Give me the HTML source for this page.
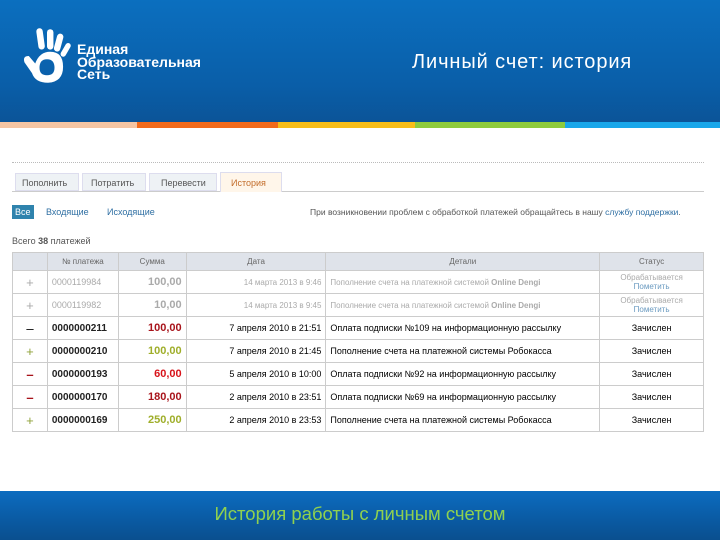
<!DOCTYPE html>
<html><head><meta charset="utf-8"><style>
*{margin:0;padding:0;box-sizing:border-box}
body{width:720px;height:540px;position:relative;background:#fff;font-family:"Liberation Sans",sans-serif;overflow:hidden}
.hdr{position:absolute;left:0;top:0;width:720px;height:122px;background:linear-gradient(#0b6fbf,#0a5ea8 70%,#0b5498)}
.str{position:absolute;top:122px;height:6px}
.ft{position:absolute;left:0;top:491px;width:720px;height:49px;background:linear-gradient(#0c6cc0,#0a5aa2 60%,#0a4f8f);text-align:center;color:#8fd14f;font-size:18.5px;line-height:46px}
.a{position:absolute;font-size:9px;color:#555;white-space:nowrap}
table{position:absolute;left:12px;top:252px;width:692px;border-collapse:collapse;font-size:9px}
td{border:1px solid #ccc;height:23px;white-space:nowrap;padding:0 4px}
tr.h td{background:#dfe3ea;height:18px;text-align:center;color:#666;font-size:8px}
.g{color:#aaa}.b{font-weight:bold;color:#222;font-size:10px}
.r{text-align:right;font-weight:bold;font-size:11px}
</style></head><body>
<div class="hdr">
<svg style="position:absolute;left:22px;top:26px" width="50" height="60" viewBox="0 0 46 56"><g fill="#fff"><rect x="14" y="2" width="6" height="20" rx="3" transform="rotate(-8 17 12)"/><rect x="23" y="3" width="6" height="19" rx="3"/><rect x="31" y="7" width="6" height="17" rx="3" transform="rotate(15 34 15)"/><rect x="38" y="15" width="5" height="14" rx="2.5" transform="rotate(30 40 22)"/><path d="M2 34 Q0 28 6 28 L12 35 Q16 24 26 24 Q38 24 38 38 Q38 52 24 53 Q12 53 9 44 Z M23 31 Q16 31 16 39 Q16 46 23 46 Q30 46 30 39 Q30 31 23 31Z" fill-rule="evenodd"/></g></svg>
<div style="position:absolute;left:77px;top:43px;color:#fff;font-weight:bold;font-size:14px;line-height:12.5px">Единая<br>Образовательная<br>Сеть</div>
<div style="position:absolute;left:412px;top:51px;color:#fff;font-size:20px;letter-spacing:0.9px">Личный счет: история</div>
</div>
<div class="str" style="left:0;width:137px;background:#f5c5a3"></div>
<div class="str" style="left:137px;width:141px;background:#f26a1b"></div>
<div class="str" style="left:278px;width:137px;background:#f7bd19"></div>
<div class="str" style="left:415px;width:150px;background:#8ecb3d"></div>
<div class="str" style="left:565px;width:155px;background:#19a7ea"></div>
<div style="position:absolute;left:12px;top:162px;width:692px;border-top:1px dotted #bbb"></div>
<div style="position:absolute;left:12px;top:191px;width:692px;border-top:1px solid #ccc"></div>
<div class="a" style="left:15px;top:173px;width:64px;height:18px;background:#eef2f5;border:1px solid #dde;padding:4px 6px">Пополнить</div>
<div class="a" style="left:82px;top:173px;width:64px;height:18px;background:#eef2f5;border:1px solid #dde;padding:4px 8px">Потратить</div>
<div class="a" style="left:149px;top:173px;width:68px;height:18px;background:#eef2f5;border:1px solid #dde;padding:4px 11px">Перевести</div>
<div class="a" style="left:220px;top:172px;width:62px;height:20px;background:#fff6ea;border:1px solid #dde;border-bottom:none;padding:5px 10px;color:#c36d2b">История</div>
<div class="a" style="left:12px;top:205px;background:#2f83ad;color:#fff;padding:2px 3px">Все</div>
<div class="a" style="left:46px;top:207px;color:#2f6fa3">Входящие</div>
<div class="a" style="left:107px;top:207px;color:#2f6fa3">Исходящие</div>
<div class="a" style="left:310px;top:207px;font-size:8.5px">При возникновении проблем с обработкой платежей обращайтесь в нашу <span style="color:#2f6fa3">службу поддержки</span>.</div>
<div class="a" style="left:12px;top:236px">Всего <b>38</b> платежей</div>
<table>
<col style="width:35px"><col style="width:71px"><col style="width:68px"><col style="width:140px"><col style="width:274px"><col style="width:104px">
<tr class="h"><td></td><td>№ платежа</td><td>Сумма</td><td>Дата</td><td>Детали</td><td>Статус</td></tr>
<tr class="g"><td style="text-align:center;font-size:13px">+</td><td>0000119984</td><td class="r" style="color:#aaa">100,00</td><td style="text-align:right;font-size:8px">14 марта 2013 в 9:46</td><td style="font-size:8px">Пополнение счета на платежной системой <b>Online Dengi</b></td><td style="text-align:center;font-size:8px;line-height:9px">Обрабатывается<br><span style="color:#6a9ac0">Пометить</span></td></tr>
<tr class="g"><td style="text-align:center;font-size:13px">+</td><td>0000119982</td><td class="r" style="color:#aaa">10,00</td><td style="text-align:right;font-size:8px">14 марта 2013 в 9:45</td><td style="font-size:8px">Пополнение счета на платежной системой <b>Online Dengi</b></td><td style="text-align:center;font-size:8px;line-height:9px">Обрабатывается<br><span style="color:#6a9ac0">Пометить</span></td></tr>
<tr><td style="text-align:center;font-size:13px">–</td><td class="b">0000000211</td><td class="r" style="color:#a8141b">100,00</td><td style="text-align:right">7 апреля 2010 в 21:51</td><td>Оплата подписки №109 на информационную рассылку</td><td style="text-align:center">Зачислен</td></tr>
<tr><td style="text-align:center;font-size:13px;color:#8fa23a">+</td><td class="b">0000000210</td><td class="r" style="color:#9fae2a">100,00</td><td style="text-align:right">7 апреля 2010 в 21:45</td><td>Пополнение счета на платежной системы Робокасса</td><td style="text-align:center">Зачислен</td></tr>
<tr><td style="text-align:center;font-size:13px;color:#a8141b;font-weight:bold">–</td><td class="b">0000000193</td><td class="r" style="color:#d8141b">60,00</td><td style="text-align:right">5 апреля 2010 в 10:00</td><td>Оплата подписки №92 на информационную рассылку</td><td style="text-align:center">Зачислен</td></tr>
<tr><td style="text-align:center;font-size:13px;color:#a8141b;font-weight:bold">–</td><td class="b">0000000170</td><td class="r" style="color:#a8141b">180,00</td><td style="text-align:right">2 апреля 2010 в 23:51</td><td>Оплата подписки №69 на информационную рассылку</td><td style="text-align:center">Зачислен</td></tr>
<tr><td style="text-align:center;font-size:13px;color:#8fa23a">+</td><td class="b">0000000169</td><td class="r" style="color:#9fae2a">250,00</td><td style="text-align:right">2 апреля 2010 в 23:53</td><td>Пополнение счета на платежной системы Робокасса</td><td style="text-align:center">Зачислен</td></tr>
</table>
<div class="ft">История работы с личным счетом</div>
</body></html>
